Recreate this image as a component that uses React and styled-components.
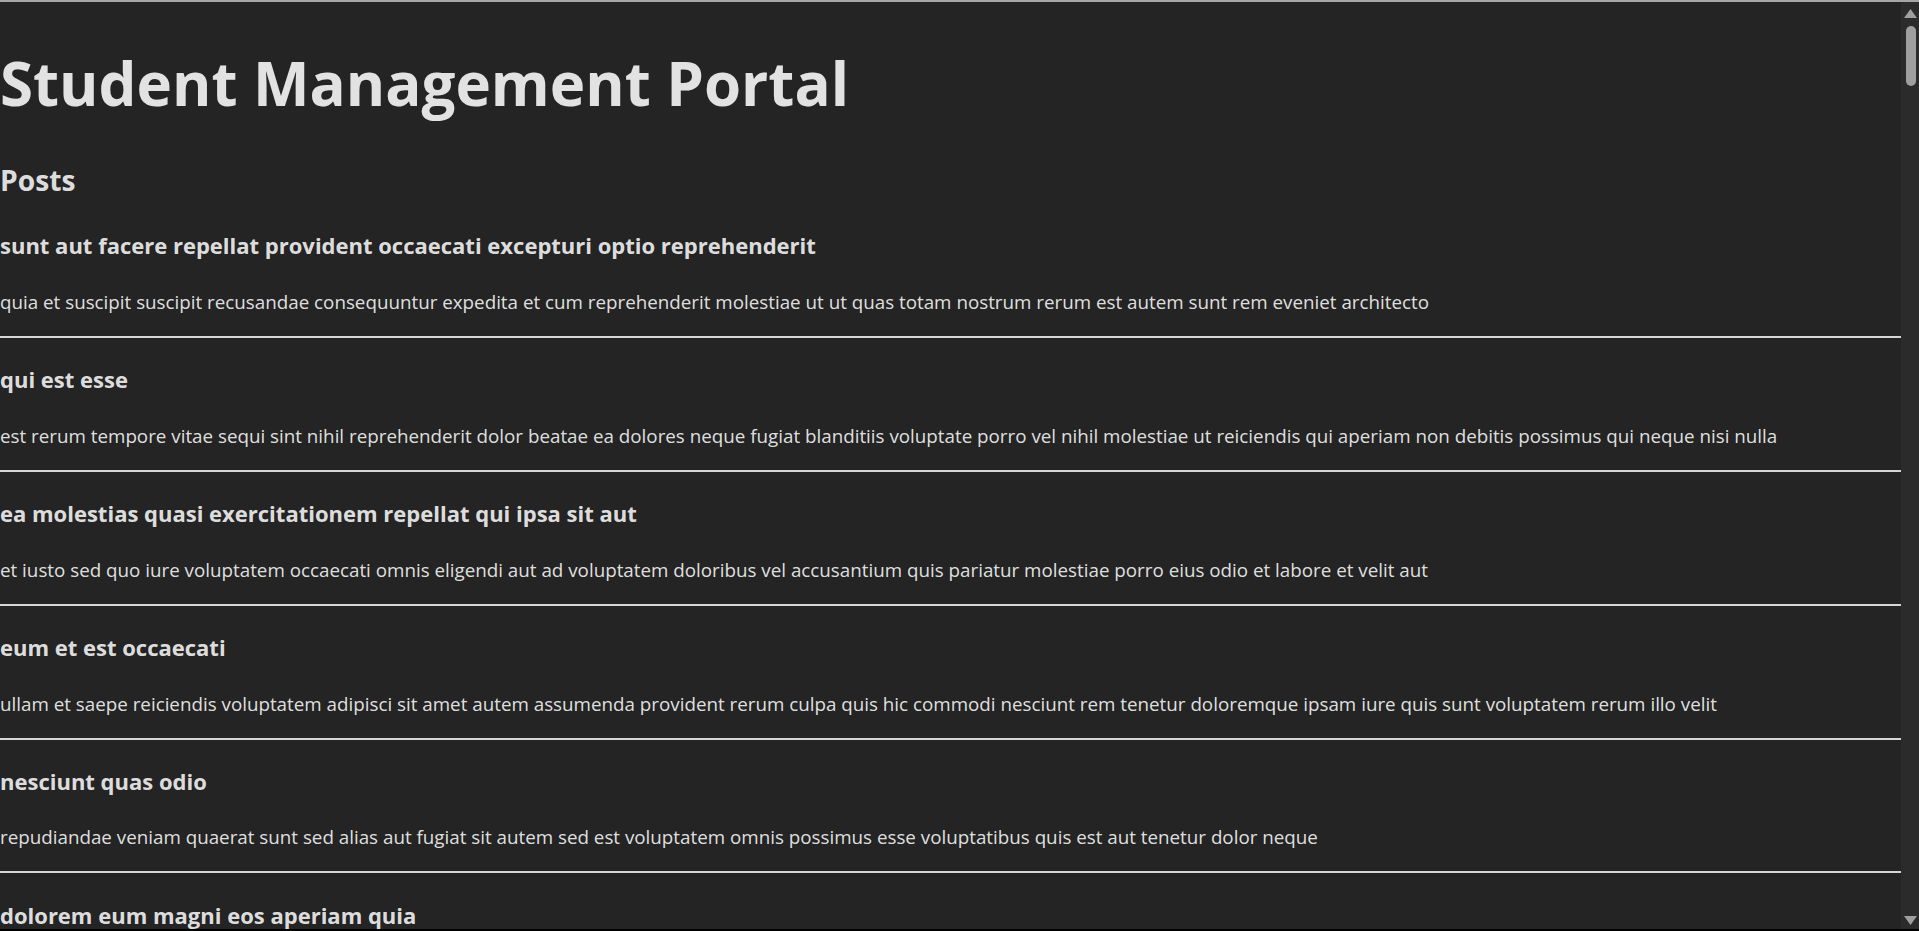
import styled, { createGlobalStyle } from 'styled-components'

const GlobalStyle = createGlobalStyle`
  html, body {
    margin: 0;
    padding: 0;
    height: 100%;
    background: #242424;
  }
  body {
    font-family: "Open Sans", "Noto Sans", sans-serif;
    font-weight: 400;
    color: rgba(255, 255, 255, 0.87);
    font-synthesis: none;
    text-rendering: optimizeLegibility;
  }
`

const Frame = styled.div`
  height: 100vh;
  box-sizing: border-box;
  display: flex;
  border-top: 2px solid #a6a6a6;
  border-bottom: 2px solid #000;
`

const Page = styled.main`
  flex: 1;
  min-width: 0;
  overflow: hidden;
  background: #242424;
`

const Rail = styled.div`
  width: 18px;
  flex-shrink: 0;
  display: flex;
  flex-direction: column;
  background: #2b2b2b;
`

const RailButton = styled.div`
  height: 22px;
  display: flex;
  justify-content: center;
  align-items: ${({ $down }) => ($down ? 'flex-end' : 'flex-start')};
  padding: ${({ $down }) => ($down ? '0 0 4px 1px' : '7px 0 0 1px')};
  box-sizing: border-box;
`

const Track = styled.div`
  flex: 1;
  padding: 2px 3px 0 5px;
`

const Thumb = styled.div`
  height: 60px;
  border-radius: 5px;
  background: #9f9f9f;
`

const Title = styled.h1`
  font-size: 60px;
  line-height: 70.4px;
  font-weight: 700;
  margin: 46px 0 40px;
`

const SectionTitle = styled.h2`
  font-size: 28.2px;
  line-height: 45px;
  font-weight: 700;
  margin: 25px 0;
`

const Post = styled.div`
  border-bottom: 2px solid #d6d6d6;
`

const PostTitle = styled.h3`
  font-size: 22px;
  line-height: 35.1px;
  font-weight: 700;
  margin: 24.4px 0 23.4px;
`

const PostBody = styled.p`
  font-size: 18.8px;
  line-height: 30px;
  margin: 20px 0 19px;
`

const posts = [
  ['sunt aut facere repellat provident occaecati excepturi optio reprehenderit', 'quia et suscipit suscipit recusandae consequuntur expedita et cum reprehenderit molestiae ut ut quas totam nostrum rerum est autem sunt rem eveniet architecto'],
  ['qui est esse', 'est rerum tempore vitae sequi sint nihil reprehenderit dolor beatae ea dolores neque fugiat blanditiis voluptate porro vel nihil molestiae ut reiciendis qui aperiam non debitis possimus qui neque nisi nulla'],
  ['ea molestias quasi exercitationem repellat qui ipsa sit aut', 'et iusto sed quo iure voluptatem occaecati omnis eligendi aut ad voluptatem doloribus vel accusantium quis pariatur molestiae porro eius odio et labore et velit aut'],
  ['eum et est occaecati', 'ullam et saepe reiciendis voluptatem adipisci sit amet autem assumenda provident rerum culpa quis hic commodi nesciunt rem tenetur doloremque ipsam iure quis sunt voluptatem rerum illo velit'],
  ['nesciunt quas odio', 'repudiandae veniam quaerat sunt sed alias aut fugiat sit autem sed est voluptatem omnis possimus esse voluptatibus quis est aut tenetur dolor neque'],
  ['dolorem eum magni eos aperiam quia', 'ut aspernatur corporis harum nihil quis provident sequi mollitia nobis aliquid molestiae perspiciatis et ea nemo ab reprehenderit accusantium quas voluptate dolores velit et doloremque molestiae'],
  ['magnam facilis autem', 'dolore placeat quibusdam ea quo vitae magni quis enim qui quis quo nemo aut saepe quidem repellat excepturi ut quia sunt ut sequi eos ea sed quas'],
].map(([title, body], i) => ({ id: i + 1, title, body }))

const Arrow = ({ down }) => (
  <svg width="13" height="9" viewBox="0 0 13 9">
    <path d={down ? 'M0 0 L13 0 L6.5 9 Z' : 'M0 9 L13 9 L6.5 0 Z'} fill="#9f9f9f" />
  </svg>
)

function App() {
  return (
    <>
      <GlobalStyle />
      <Frame>
        <Page>
          <Title>Student Management Portal</Title>
          <SectionTitle>Posts</SectionTitle>
          {posts.map((post) => (
            <Post key={post.id}>
              <PostTitle>{post.title}</PostTitle>
              <PostBody>{post.body}</PostBody>
            </Post>
          ))}
        </Page>
        <Rail>
          <RailButton>
            <Arrow />
          </RailButton>
          <Track>
            <Thumb />
          </Track>
          <RailButton $down>
            <Arrow down />
          </RailButton>
        </Rail>
      </Frame>
    </>
  )
}

export default App
